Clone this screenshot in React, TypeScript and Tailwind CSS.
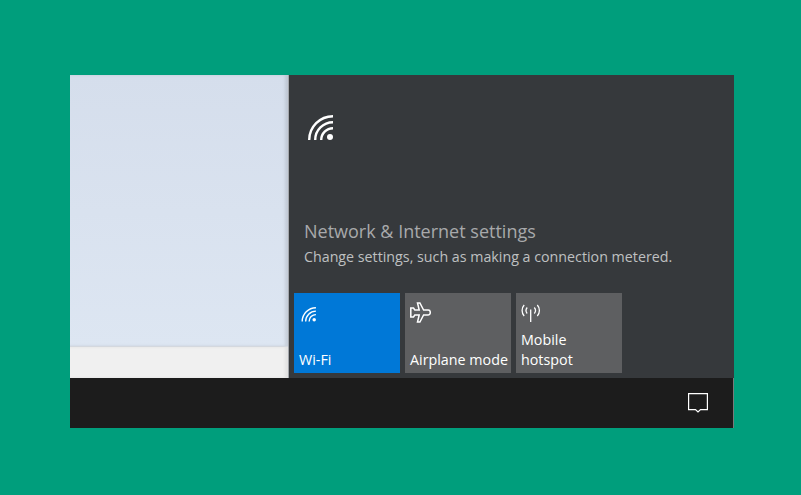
const FONT = 'font-["Open_Sans",sans-serif]';

function WifiIcon({ className }: { className: string }) {
  return (
    <svg viewBox="0 0 26 26" fill="none" stroke="currentColor" strokeWidth="2.4" className={className}>
      <path d="M1.2 25A23.8 23.8 0 0 1 25 1.2" />
      <path d="M7.2 25A17.8 17.8 0 0 1 25 7.2" />
      <path d="M13.2 25A11.8 11.8 0 0 1 25 13.2" />
      <circle cx="22" cy="22" r="3" fill="currentColor" stroke="none" />
    </svg>
  );
}

function PlaneIcon() {
  return (
    <svg viewBox="0 0 21 21" fill="none" stroke="currentColor" strokeWidth="1.5" className="h-[21px] w-[21px]">
      <path d="M7.500 1h2.400l3.700 7h4.700c1.300 0 2 1.200 2 2.500S19.600 13 18.300 13h-4.700l-3.700 7H7.500l1.700-7H4.800l-1.300 2H.8V6h2.700l1.300 2h4.400z" />
    </svg>
  );
}

function HotspotIcon() {
  return (
    <svg viewBox="0 0 20 19" fill="none" stroke="currentColor" strokeWidth="1.3" className="h-[19px] w-[20px]">
      <path d="M9.700 5.500V18" />
      <path d="M3.200 1C.4 4 .4 9 3.200 12" />
      <path d="M6.200 3.500c-1.400 1.700-1.400 4.300 0 6" />
      <path d="M16.300 1c2.800 3 2.800 8 0 11" />
      <path d="M13.300 3.500c1.400 1.700 1.400 4.300 0 6" />
    </svg>
  );
}

function Tile({
  icon,
  label,
  active,
}: {
  icon: React.ReactNode;
  label: string[];
  active?: boolean;
}) {
  return (
    <div
      className={`flex h-20 w-[106px] flex-col justify-between px-[5px] pb-[3px] text-white ${
        active ? 'bg-[#0078d7]' : 'bg-[#5e5f61]'
      }`}
    >
      <div className="flex h-[30px] items-end">{icon}</div>
      <div className="whitespace-nowrap text-[14.3px] leading-[20px]">
        {label.map((line) => (
          <div key={line}>{line}</div>
        ))}
      </div>
    </div>
  );
}

export default function App() {
  return (
    <div className={`h-[495px] w-[801px] overflow-hidden bg-[#009e7c] pl-[70px] pt-[75px] ${FONT}`}>
      <div className="flex h-[303px] w-[664px]">
        {/* Window behind the flyout */}
        <div className="flex w-[219px] flex-col border-r border-[#a3a6ab]">
          <div className="flex-1 border-b border-[#d4d8de] bg-gradient-to-b from-[#d5deec] to-[#dde6f2] shadow-[inset_-3px_0_3px_rgba(0,0,0,0.1)]" />
          <div className="h-[31px] bg-[#f0f0f0] shadow-[inset_-3px_0_3px_rgba(0,0,0,0.06)]" />
        </div>

        {/* Network flyout */}
        <div className="flex flex-1 flex-col bg-[#36393c]">
          <div className="pl-[19px] pt-10">
            <WifiIcon className="h-[26px] w-[26px] text-white" />
          </div>
          <div className="pl-[15px] pt-[78px]">
            <div className="text-[18px] leading-[24px] text-[#a8a9ab]">Network &amp; Internet settings</div>
            <div className="mt-1 text-[14.25px] leading-[20px] text-[#bfc0c1]">
              Change settings, such as making a connection metered.
            </div>
          </div>
          <div className="flex gap-[5px] pl-[5px] pt-[26px]">
            <Tile active icon={<WifiIcon className="mb-[1px] ml-[2px] h-[15px] w-[16px]" />} label={['Wi-Fi']} />
            <Tile icon={<PlaneIcon />} label={['Airplane mode']} />
            <Tile icon={<HotspotIcon />} label={['Mobile', 'hotspot']} />
          </div>
        </div>
      </div>

      {/* Taskbar */}
      <div className="flex h-[50px] w-[664px] items-center justify-end border-r border-[#7a7a7a] bg-[#1c1c1c] pr-[25px]">
        <svg viewBox="0 0 20 20" fill="none" stroke="white" strokeWidth="1.2" className="h-5 w-5">
          <path d="M.6.600h18.800v16h-6.900L10 19l-2.500-2.400H.6z" />
        </svg>
      </div>
    </div>
  );
}
